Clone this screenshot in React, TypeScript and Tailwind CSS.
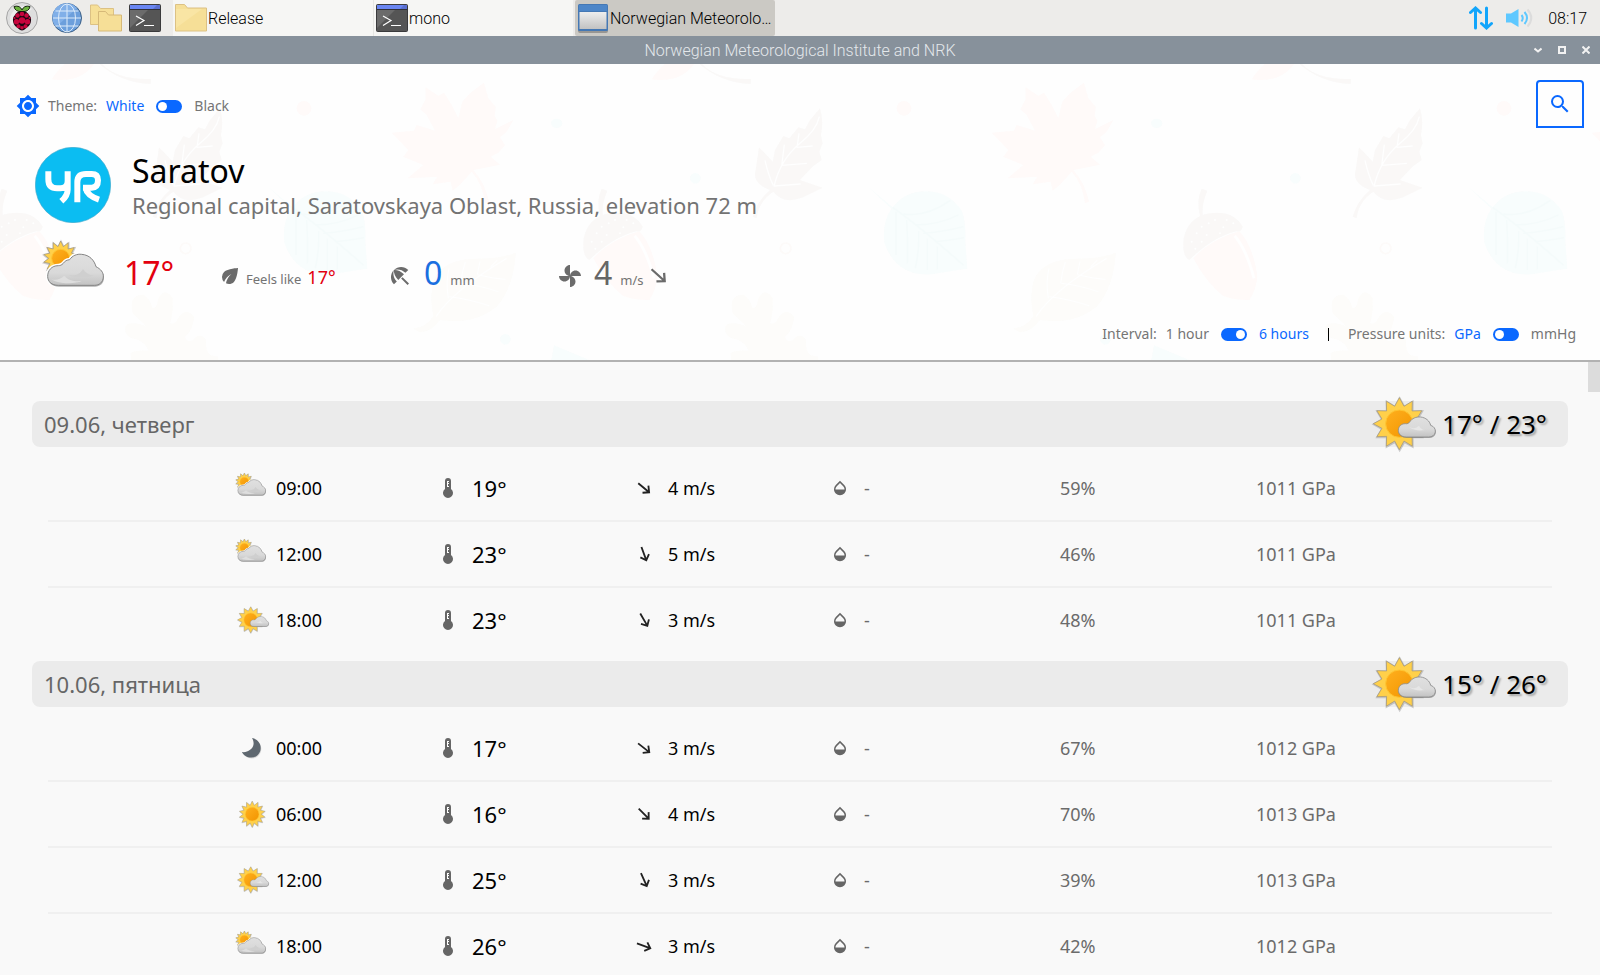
import { useId, useState } from "react";
import type { ReactNode } from "react";
import { MdBeachAccess, MdBrightness7, MdEco, MdOpacity, MdSearch } from "react-icons/md";

type Sky = "cloudy" | "fair" | "sun" | "moon";

interface Hour {
  time: string;
  sky: Sky;
  temp: string;
  windAngle: number;
  wind: string;
  humidity: string;
  pressure: string;
}

interface Day {
  title: string;
  range: string;
  hours: Hour[];
}

const days: Day[] = [
  {
    title: "09.06, четверг",
    range: "17° / 23°",
    hours: [
      { time: "09:00", sky: "cloudy", temp: "19°", windAngle: 40, wind: "4 m/s", humidity: "59%", pressure: "1011 GPa" },
      { time: "12:00", sky: "cloudy", temp: "23°", windAngle: 70, wind: "5 m/s", humidity: "46%", pressure: "1011 GPa" },
      { time: "18:00", sky: "fair", temp: "23°", windAngle: 60, wind: "3 m/s", humidity: "48%", pressure: "1011 GPa" },
    ],
  },
  {
    title: "10.06, пятница",
    range: "15° / 26°",
    hours: [
      { time: "00:00", sky: "moon", temp: "17°", windAngle: 38, wind: "3 m/s", humidity: "67%", pressure: "1012 GPa" },
      { time: "06:00", sky: "sun", temp: "16°", windAngle: 45, wind: "4 m/s", humidity: "70%", pressure: "1013 GPa" },
      { time: "12:00", sky: "fair", temp: "25°", windAngle: 66, wind: "3 m/s", humidity: "39%", pressure: "1013 GPa" },
      { time: "18:00", sky: "cloudy", temp: "26°", windAngle: 20, wind: "3 m/s", humidity: "42%", pressure: "1012 GPa" },
    ],
  },
];

function starPoints(cx: number, cy: number, outer: number, inner: number, rays: number) {
  return Array.from({ length: rays * 2 }, (_, i) => {
    const r = i % 2 === 0 ? outer : inner;
    const a = (Math.PI * i) / rays - Math.PI / 2;
    return `${(cx + r * Math.cos(a)).toFixed(1)},${(cy + r * Math.sin(a)).toFixed(1)}`;
  }).join(" ");
}

function SkyIcon({ sky, size }: { sky: Sky; size: number }) {
  const id = useId();
  const core = `${id}c`;
  const cloud = `${id}g`;
  const defs = (
    <defs>
      <linearGradient id={core} x1="0" y1="0" x2="1" y2="1">
        <stop offset="0" stopColor="#ffb01f" />
        <stop offset="1" stopColor="#f29400" />
      </linearGradient>
      <linearGradient id={cloud} x1="0" y1="0" x2="0" y2="1">
        <stop offset="0" stopColor="#e0e0e0" />
        <stop offset="0.6" stopColor="#d9d9d9" />
        <stop offset="1" stopColor="#c2c2c2" />
      </linearGradient>
    </defs>
  );
  const sun = (cx: number, cy: number, outer: number, inner: number, coreR: number, rays: number) => (
    <>
      <polygon points={starPoints(cx + 1, cy + 2, outer + 2, inner + 2, rays)} fill="#777" opacity="0.35" stroke="#777" strokeWidth="4" />
      <polygon points={starPoints(cx, cy, outer, inner, rays)} fill="#ffd04a" stroke="#9c917a" strokeWidth="2" />
      <circle cx={cx} cy={cy} r={coreR} fill={`url(#${core})`} stroke="#ffc531" strokeWidth="3" />
    </>
  );

  if (sky === "moon") {
    const d = "M18 8c5 1 8.700 5 8.700 10 0 5.500-4.200 9.600-9.400 9.600-4.300 0-7.800-2.100-9.300-5.600 5 1 11-3 11.500-7.500.3-2.500-.2-4.500-1.500-6.500z";
    return (
      <svg width={size} height={size} viewBox="0 0 36 36" aria-hidden="true">
        <path d={d} fill="#777" opacity="0.25" transform="translate(0.600 0.800)" />
        <path d={d} fill="#5f6870" />
      </svg>
    );
  }
  if (sky === "sun") {
    return (
      <svg width={size} height={size} viewBox="-108 -108 216 216" aria-hidden="true">
        {defs}
        {sun(1, 1, 78, 54, 41, 14)}
      </svg>
    );
  }
  if (sky === "fair") {
    const d = "M977 892C962 892 953 884 953 872 953 860 962 852 974 852 980 853 984 851 987 847 994 836 1006 831 1020 832 1036 834 1047 844 1050 857 1060 860 1065 868 1064 877 1062 887 1054 892 1044 892Z";
    return (
      <svg width={size} height={size} viewBox="856 745 216 216" aria-hidden="true">
        {defs}
        {sun(956, 852, 78, 54, 41, 12)}
        <path d={d} fill="#666" transform="translate(1.500 3)" opacity="0.5" />
        <path d={d} fill={`url(#${cloud})`} stroke="#8c8c8c" strokeWidth="2.500" />
        <path d="M985 862c12 6 22 4 30-4 4 8 10 12 18 13-20 3-34 1-48-9z" fill="#e6e6e6" />
      </svg>
    );
  }
  const d = "M178 467C158 467 146 456 146 440 146 422 158 408 178 408 184 408 188 406 192 402 198 393 204 391 212 390 220 378 234 372 248 374 272 376 286 392 291 411 305 418 314 428 313 442 312 458 301 467 286 467Z";
  return (
    <svg width={size} height={size} viewBox="123 316 216 216" aria-hidden="true">
      {defs}
      {sun(185, 386, 52, 36, 27, 14)}
      <path d={d} fill="#fff" stroke="#fff" strokeWidth="11" />
      <path d={d} fill="#555" transform="translate(2 4)" opacity="0.45" />
      <path d={d} fill={`url(#${cloud})`} stroke="#858585" strokeWidth="3" />
      <path d="M208 436c22 4 34-2 44-18 8 12 18 18 32 20-28 8-54 8-76-2z" fill="#cfcfcf" />
      <path d="M152 444c12 12 30 6 44-6 10 14 30 18 52 16-20 10-78 10-96-10z" fill="#dedede" />
    </svg>
  );
}

function WindArrow({ angle, size, color }: { angle: number; size: number; color: string }) {
  return (
    <svg width={size} height={size} viewBox="-12 -12 24 24" aria-hidden="true" fill="none" stroke={color} strokeWidth="2.200">
      <g transform={`rotate(${angle})`}>
        <path d="M-9 0H7.500M2.300-5.500 8 0l-5.700 5.500" />
      </g>
    </svg>
  );
}

function Thermometer() {
  return (
    <svg width="12" height="20" viewBox="0 0 12 20" aria-hidden="true">
      <path d="M3 11V3a3 3 0 0 1 6 0v8a5 5 0 1 1-6 0z" fill="#666" />
      <path d="M5 3h2v1H6v1h1v1H6v2h1v1H5z" fill="#fff" />
    </svg>
  );
}

function Fan() {
  return (
    <svg width="24" height="24" viewBox="0 0 24 24" fill="#6b6b6b" aria-hidden="true">
      <path d="M12 12c0-3 2.500-5.500 5.500-5.500S23 9 23 12H12zm0 0c0 3-2.500 5.500-5.500 5.500S1 15 1 12h11zm0 0c-3 0-5.500-2.500-5.500-5.500S9 1 12 1v11zm0 0c3 0 5.500 2.500 5.500 5.500S15 23 12 23V12z" />
    </svg>
  );
}

function YrLogo() {
  return (
    <svg width="76" height="76" viewBox="0 0 228 228" role="img" aria-label="YR">
      <circle cx="114" cy="114" r="113" fill="#0bbdf2" stroke="#3fa9cc" strokeWidth="2" />
      <g fill="none" stroke="#fff" strokeWidth="18" strokeLinejoin="round">
        <path d="M40 73v24q0 27 26 27h10q22 0 22-22M98 73v55q0 18-19 35" />
        <path d="M127 166V106q0-25 26-25h17q19 0 19 19 0 22-19 22h-26M152 124q4 22 40 34" />
      </g>
    </svg>
  );
}

function Leaves() {
  const capDots = [
    [1106, 490], [1150, 502], [1070, 520], [1140, 520], [1055, 545], [1085, 500],
    [1066, 566], [1100, 525], [1125, 480], [1180, 490], [1160, 480], [1085, 545],
  ];
  return (
    <svg className="pointer-events-none absolute inset-0 h-full w-full" aria-hidden="true">
      <defs>
        <pattern id="leaves" x="240" y="0" width="600" height="600" patternUnits="userSpaceOnUse">
          <g transform="scale(0.33333) translate(0 -12)" opacity="0.75">
            <g fill="#fff8f7">
              <path d="M732 68 L745 115 767 140 764 168 772 182 765 208 820 180 800 215 780 232 795 256 775 278 752 290 780 314 700 330 Q735 370 747 425 L735 430 Q728 370 695 335 L662 372 638 392 632 365 578 373 592 350 503 355 550 315 490 290 505 270 455 218 522 212 530 195 585 212 560 165 541 148 557 118 557 82 595 108 612 98 635 135 655 175 667 125 690 100Z" />
              <circle cx="192" cy="145" r="22" />
              <path d="M1235 58Q1270 5 1300 0H1370Q1330 70 1235 58Z" />
              <path d="M1060 595Q1110 540 1198 514 1240 560 1252 650 1248 690 1228 720 1180 720 1150 708 1100 670 1060 595Z" />
            </g>
            <path d="M1184 527Q1220 570 1242 655" fill="none" stroke="#fff" strokeWidth="9" />
            <g fill="#f8f6f5">
              <path d="M1085 386l17 6Q1085 430 1088 470L1080 468Q1068 420 1085 386Z" />
              <path d="M1048 600Q1025 590 1031 535 1045 470 1110 460 1180 450 1208 500 1205 516 1190 514 1120 530 1048 600Z" />
              <path d="M1384 10Q1430 60 1532 57V72Q1440 68 1376 10Z" />
              <path transform="translate(360 0)" d="M1380 145Q1392 180 1383 225L1388 250 1378 275 1385 300 1360 318 1320 360 1388 383 1330 412Q1270 435 1240 395 1195 425 1190 475L1178 470Q1190 425 1230 390 1175 370 1187 330L1197 262 1225 290 1238 305 1245 270 1270 228 1288 235 1315 202 1335 208 1350 180Z" />
            </g>
            <g transform="translate(360 0)" fill="none" stroke="#fff" strokeWidth="4">
              <path d="M1242 380Q1260 300 1320 250 1370 210 1378 170M1265 318l8-64M1265 316l76-6M1312 256l5-36M1310 262l48-4M1242 378l80-6M1240 376q-15-30-25-75" />
            </g>
            <g fill="#fcfbf8">
              <path d="M827 578Q822 680 770 740 700 795 600 780 575 815 540 817L520 806Q560 802 580 768 570 720 577 680 590 605 690 597 790 595 827 578Z" />
              <path transform="translate(360 0)" d="M1118 760Q1105 705 1150 704 1170 715 1178 745 1192 745 1195 715 1215 680 1238 715 1240 760 1230 790 1245 795 1255 775 1275 740 1302 770 1300 810 1275 830 1280 850 1300 840 1320 815 1338 840 1335 870 1350 885L1375 890V990H1110Q1115 920 1112 880 1125 870 1165 872 1160 850 1130 838 1090 830 1096 800 1110 780 1160 800Z" />
            </g>
            <g fill="none" stroke="#fff" strokeWidth="4">
              <path d="M588 770Q640 690 800 595M625 715q-8-50 2-90M628 710q70 10 120 28M662 670q4-35 14-64M664 670q60 6 112 26M712 644l8-40M712 644q50 12 85 14M752 620l20-20" />
            </g>
            <g fill="#f6fcfc">
              <path d="M84 380l74 62q36-48 100-48 70 0 108 60 12 30 10 90l6 82q-60 8-100 16-110 12-148-90-10-60 20-106Z" />
              <ellipse cx="950" cy="190" rx="17" ry="14" />
              <circle cx="1366" cy="355" r="16" />
              <circle cx="796" cy="838" r="16" />
              <path d="M942 856L1060 905H933Z" />
            </g>
            <g fill="none" stroke="#f1fafa" strokeWidth="4">
              <path d="M158 442Q240 500 370 615M168 455v130M200 480q4 70 2 130M236 514q2 60-10 110M262 536v94M292 560v68M190 462q70 10 140-40M225 495q70 0 130-30M250 520q60-4 120-20M285 545q50-4 86-12" />
            </g>
            <circle cx="1637" cy="565" r="16" fill="none" stroke="#fcf9f7" strokeWidth="5" />
            <g fill="#fff">
              {capDots.map(([x, y]) => (
                <circle key={`${x}-${y}`} cx={x} cy={y} r="3" />
              ))}
            </g>
          </g>
        </pattern>
      </defs>
      <rect width="100%" height="100%" fill="url(#leaves)" />
    </svg>
  );
}

function Toggle({ title, left, right, initial }: { title: string; left: string; right: string; initial: boolean }) {
  const [on, setOn] = useState(initial);
  return (
    <label className="flex items-center text-[14px] leading-5 text-[#757575]">
      <span>{title}</span>
      <span className={on ? "ml-[9px]" : "ml-[9px] text-[#0a68ff]"}>{left}</span>
      <input
        type="checkbox"
        role="switch"
        checked={on}
        onChange={() => setOn(!on)}
        className="mx-3 h-[13px] w-[26px] appearance-none rounded-full bg-[#0a68ff] p-[2px] before:block before:size-[9px] before:rounded-full before:bg-white checked:before:ml-[13px]"
      />
      <span className={on ? "text-[#0a68ff]" : ""}>{right}</span>
    </label>
  );
}

function TerminalIcon() {
  return (
    <svg width="32" height="28" viewBox="0 0 32 28" aria-hidden="true">
      <rect x="0.500" y="0.500" width="31" height="27" rx="1" fill="#555" stroke="#3a3a3c" />
      <path d="M1 6h18L1 24z" fill="#6b6b6b" />
      <path d="M1 1h30v4H1z" fill="#5a6fd0" />
      <path d="M1 1h27l-4 4H1z" fill="#6a86f2" />
      <path d="M1 5.500h30" stroke="#2f3038" />
      <path d="M7 12l8 4.500-8 5M15 21.500h10" fill="none" stroke="#fff" strokeWidth="1.200" />
    </svg>
  );
}

function FolderIcon() {
  return (
    <svg width="32" height="28" viewBox="0 0 32 28" aria-hidden="true">
      <path d="M.5 27V.5h9l3 3.500h19v23z" fill="#f6df97" stroke="#dcc184" />
      <path d="M1 5h26L1 24z" fill="#f9e5a4" />
    </svg>
  );
}

function Taskbar() {
  const task = "flex h-full w-[200px] min-w-0 items-center pl-[2px] text-left";
  const label = "ml-px pt-[2px] whitespace-nowrap";
  return (
    <nav className="flex h-9 shrink-0 items-center bg-[#edecea] font-[Roboto,sans-serif] text-[16px] font-light text-black">
      <button type="button" aria-label="Menu" className="ml-[6px]">
        <svg width="32" height="32" viewBox="0 0 32 32" aria-hidden="true">
          <circle cx="16" cy="16" r="15.500" fill="#dedede" stroke="#a5a5a5" />
          <path d="M5 24A14 14 0 0 1 26 7z" fill="#ededed" />
          <path d="M16 9.500Q9 10 8 4.500q6-1.500 8 3.500 2-5 8-3.500-1 5.500-8 5z" fill="#6cb33e" stroke="#1b2a12" />
          <path d="M16 9q5 0 7 4 2.500 2 2 6-.5 4-4 6.500-3 3-5 3t-5-3q-3.500-2.500-4-6.500-.5-4 2-6 2-4 7-4z" fill="#1c0710" />
          <g fill="#c7053d">
            <circle cx="16" cy="12" r="2.300" />
            <circle cx="11.500" cy="13.500" r="2.200" />
            <circle cx="20.500" cy="13.500" r="2.200" />
            <circle cx="16" cy="18.500" r="3.200" />
            <circle cx="10.500" cy="19.800" r="2.700" />
            <circle cx="21.500" cy="19.800" r="2.700" />
            <circle cx="12.500" cy="24.300" r="2" />
            <circle cx="19.500" cy="24.300" r="2" />
            <circle cx="16" cy="25.800" r="1.800" />
            <circle cx="8.500" cy="16" r="1.100" />
            <circle cx="23.500" cy="16" r="1.100" />
          </g>
        </svg>
      </button>
      <button type="button" aria-label="Web browser" className="ml-[13px]">
        <svg width="32" height="32" viewBox="0 0 32 32" aria-hidden="true">
          <circle cx="16" cy="16" r="14.500" fill="#6c9fdc" stroke="#3d6085" />
          <path d="M5 25A14 14 0 0 1 26 6z" fill="#80afe8" />
          <g fill="none" stroke="#dcebfa" strokeWidth="1">
            <path d="M16 2v28M2 16h28M4.500 9h23M4.500 24h23" />
            <ellipse cx="16" cy="16" rx="8.500" ry="14" />
          </g>
        </svg>
      </button>
      <button type="button" aria-label="File manager" className="ml-[7px]">
        <svg width="32" height="28" viewBox="0 0 32 28" aria-hidden="true">
          <path d="M.5 20.500V1h7l3 3.500h13v16z" fill="#f6df97" stroke="#dcc184" />
          <path d="M8.500 27V7.500h7l3 3.500h13v16z" fill="#f6df97" stroke="#d6b978" />
        </svg>
      </button>
      <button type="button" aria-label="Terminal" className="ml-[7px]">
        <TerminalIcon />
      </button>
      <button type="button" className={`${task} ml-3 bg-[#f6f6f4]`}>
        <FolderIcon />
        <span className={label}>Release</span>
      </button>
      <button type="button" className={`${task} border-l border-[#e6e6e3] bg-[#f6f6f4]`}>
        <TerminalIcon />
        <span className={label}>mono</span>
      </button>
      <button type="button" className={`${task} ml-[2px] rounded-[2px] bg-[#cbc9c4]`}>
        <svg width="32" height="30" viewBox="0 0 32 30" className="shrink-0" aria-hidden="true">
          <defs>
            <linearGradient id="pane" x1="0" y1="0" x2="0" y2="1">
              <stop offset="0" stopColor="#eeeeee" />
              <stop offset="1" stopColor="#c2c2c2" />
            </linearGradient>
          </defs>
          <rect x="1" y="2" width="30" height="28" rx="2" fill="#000" opacity="0.250" />
          <rect x="1" y="1" width="30" height="27" rx="1.500" fill="#4578b4" />
          <path d="M2 2h28v6H2z" fill="#4d86c8" />
          <path d="M2.500 9h27v17h-27z" fill="url(#pane)" />
        </svg>
        <span className={label}>Norwegian Meteorolo…</span>
      </button>
      <div className="ml-auto flex items-center pr-[13px]">
        <svg width="24" height="24" viewBox="0 0 24 24" fill="none" stroke="#12a5fb" strokeWidth="3" strokeLinecap="round" aria-hidden="true">
          <path d="M6.500 22V2.500M1.500 6.500l5-4.500 5 4.500M17.500 2v19.500M12.500 17.500l5 4.500 5-4.500" />
        </svg>
        <svg className="ml-3" width="28" height="24" viewBox="0 0 28 24" fill="none" strokeWidth="2" aria-hidden="true">
          <path d="M1 7.500h5L13.500 3v18L6 16.500H1z" fill="#5ec8ff" />
          <path d="M16.500 9q2.500 3 0 6.500M19.500 6q5 6 0 12" stroke="#5ec8ff" />
          <path d="M22.500 3.500q7.500 8.500 0 17" stroke="#dcdcdc" />
        </svg>
        <time className="ml-[15px] pt-[2px]">08:17</time>
      </div>
    </nav>
  );
}

function TitleBar() {
  const control = "flex size-6 items-center justify-center";
  return (
    <div className="grid h-7 shrink-0 grid-cols-[1fr_auto_1fr] items-center bg-[#87919b] font-[Roboto,sans-serif] text-[16px] font-light text-[#e4e8eb]">
      <span />
      <span className="pt-[2px]">Norwegian Meteorological Institute and NRK</span>
      <div className="flex justify-end pr-[2px]">
        <button type="button" aria-label="Minimize" className={control}>
          <svg width="8" height="8" viewBox="0 0 8 8" fill="none" stroke="#f2f2f2" strokeWidth="2"><path d="M.5 2.500 4 5.500l3.500-3" /></svg>
        </button>
        <button type="button" aria-label="Maximize" className={control}>
          <svg width="8" height="8" viewBox="0 0 8 8" fill="none" stroke="#f2f2f2" strokeWidth="2"><path d="M1 1h6v6H1z" /></svg>
        </button>
        <button type="button" aria-label="Close" className={control}>
          <svg width="8" height="8" viewBox="0 0 8 8" fill="none" stroke="#f2f2f2" strokeWidth="2"><path d="M.5.5l7 7M7.500.5l-7 7" /></svg>
        </button>
      </div>
    </div>
  );
}

function Metric({ icon, children }: { icon: ReactNode; children: ReactNode }) {
  return (
    <div className="flex w-[170px] items-center">
      <span className="pt-[6px]">{icon}</span>
      <div className="flex items-baseline">{children}</div>
    </div>
  );
}

function Cell({ icon, className, children }: { icon?: ReactNode; className: string; children: ReactNode }) {
  return (
    <td className="p-0">
      <div className="flex items-center">
        <span className="flex w-16 shrink-0 justify-center pl-4">{icon}</span>
        <span className={`whitespace-nowrap ${className}`}>{children}</span>
      </div>
    </td>
  );
}

function DayForecast({ day }: { day: Day }) {
  return (
    <section className="mb-[7px]">
      <div className="mx-8 mb-[9px] flex h-[46px] items-center justify-between rounded-lg bg-[#ebebeb] pr-[21px] pl-3">
        <h2 className="text-[22px] text-[#666]">{day.title}</h2>
        <div className="flex items-center gap-1">
          <SkyIcon sky="fair" size={72} />
          <span className="text-[26px] text-black [text-shadow:2px_2px_2px_rgba(0,0,0,0.3)]">{day.range}</span>
        </div>
      </div>
      <div className="px-12">
        <table aria-label={day.title} className="w-full table-fixed border-separate border-spacing-0 text-[18px]">
          <colgroup>
            <col />
            <col className="w-[196px]" />
            <col className="w-[196px]" />
            <col className="w-[196px]" />
            <col className="w-[196px]" />
            <col className="w-[196px]" />
            <col className="w-[196px]" />
            <col />
          </colgroup>
          <tbody>
            {day.hours.map((h) => (
              <tr key={h.time} className="h-[66px] border-[#f0f0f0] last:border-transparent [&>td]:border-b-2 [&>td]:border-inherit">
                <td />
                <Cell icon={<SkyIcon sky={h.sky} size={36} />} className="text-black">{h.time}</Cell>
                <Cell icon={<Thermometer />} className="text-[22px] text-black">{h.temp}</Cell>
                <Cell icon={<WindArrow angle={h.windAngle} size={20} color="#222" />} className="text-black">{h.wind}</Cell>
                <Cell icon={<MdOpacity size={18} color="#666" />} className="text-[#6b6b6b]">-</Cell>
                <Cell className="text-[#6b6b6b]">{h.humidity}</Cell>
                <Cell className="text-[#6b6b6b]">{h.pressure}</Cell>
                <td />
              </tr>
            ))}
          </tbody>
        </table>
      </div>
    </section>
  );
}

export default function App() {
  return (
    <div className="flex h-screen flex-col overflow-hidden bg-[#f9f9f9] font-['Noto_Sans',sans-serif]">
      <Taskbar />
      <TitleBar />
      <header className="relative shrink-0 border-b-2 border-[#b2b2b2] bg-[#fefefe] pb-4">
        <Leaves />
        <div className="relative">
          <div className="flex items-start justify-between px-4 pt-4">
            <div className="flex items-center gap-2 pt-4">
              <MdBrightness7 size={24} color="#0a68ff" className="-my-[2px]" />
              <Toggle title="Theme:" left="White" right="Black" initial={false} />
            </div>
            <button type="button" aria-label="Search" className="flex size-12 items-center justify-center rounded-t-[4px] border-2 border-[#0a68ff]">
              <MdSearch size={24} color="#0a68ff" />
            </button>
          </div>
          <div className="mt-[19px] flex gap-[21px] pl-[35px]">
            <YrLogo />
            <div className="pt-1">
              <h1 className="text-[32px] leading-10 text-black">Saratov</h1>
              <p className="text-[22px] leading-7 text-[#737373]">Regional capital, Saratovskaya Oblast, Russia, elevation 72 m</p>
            </div>
          </div>
          <div className="mt-3 flex h-[72px] items-center pl-10">
            <SkyIcon sky="cloudy" size={72} />
            <div className="flex items-center pt-[3px] pl-3 text-[13px] text-[#737373]">
              <span className="w-[94px] text-[32px] leading-10 text-[#e3000f]">17°</span>
              <Metric icon={<MdEco size={24} color="#6b6b6b" />}>
                <span className="ml-1">Feels like</span>
                <span className="ml-[6px] pt-[10px] text-[18px] leading-[27px] text-[#e3000f]">17°</span>
              </Metric>
              <Metric icon={<MdBeachAccess size={24} color="#6b6b6b" />}>
                <span className="ml-3 text-[32px] leading-10 text-[#1a6fe0]">0</span>
                <span className="ml-2">mm</span>
              </Metric>
              <Metric icon={<Fan />}>
                <span className="ml-3 text-[32px] leading-10 text-[#666]">4</span>
                <span className="mr-[2px] ml-2">m/s</span>
                <span className="self-center pt-[6px]">
                  <WindArrow angle={42} size={25} color="#6b6b6b" />
                </span>
              </Metric>
            </div>
          </div>
          <div className="mt-[17px] flex items-center justify-end pr-6">
            <Toggle title="Interval:" left="1 hour" right="6 hours" initial={true} />
            <span aria-hidden="true" className="mr-[19px] ml-[19px] h-[13px] w-px bg-black" />
            <Toggle title="Pressure units:" left="GPa" right="mmHg" initial={false} />
          </div>
        </div>
      </header>
      <div className="relative min-h-0 flex-1">
        <main className="h-full overflow-y-auto pt-[39px] [scrollbar-width:none]">
          {days.map((day) => (
            <DayForecast key={day.title} day={day} />
          ))}
        </main>
        <div className="absolute top-0 right-0 h-[30px] w-3 bg-[#dcdcdc]" />
      </div>
    </div>
  );
}
